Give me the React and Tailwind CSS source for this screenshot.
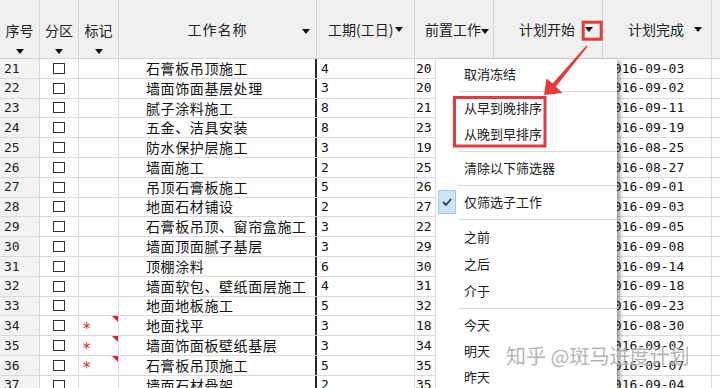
import React from "react";

const rows = [
  [21, "石膏板吊顶施工", 4, 20, "2016-09-03"],
  [22, "墙面饰面基层处理", 3, 20, "2016-09-02"],
  [23, "腻子涂料施工", 8, 21, "2016-09-11"],
  [24, "五金、洁具安装", 8, 23, "2016-09-19"],
  [25, "防水保护层施工", 3, 19, "2016-08-25"],
  [26, "墙面施工", 2, 25, "2016-08-27"],
  [27, "吊顶石膏板施工", 5, 26, "2016-09-01"],
  [28, "地面石材铺设", 2, 27, "2016-09-03"],
  [29, "石膏板吊顶、窗帘盒施工", 3, 22, "2016-09-05"],
  [30, "墙面顶面腻子基层", 3, 29, "2016-09-08"],
  [31, "顶棚涂料", 6, 30, "2016-09-14"],
  [32, "墙面软包、壁纸面层施工", 4, 31, "2016-09-18"],
  [33, "地面地板施工", 5, 32, "2016-09-23"],
  [34, "地面找平", 3, 18, "2016-08-30", true],
  [35, "墙面饰面板壁纸基层", 3, 34, "2016-09-02", true],
  [36, "石膏板吊顶施工", 5, 35, "2016-09-07", true],
  [37, "墙面石材骨架", 2, 35, "2016-09-04"],
];

const mono = "font-['DejaVu_Sans_Mono','Noto_Sans_CJK_SC',monospace] text-[13px]";

function Caret() {
  return <div className="w-0 h-0 border-x-[4px] border-x-transparent border-t-[5px] border-t-[#111]" />;
}

function StackHead({ w, label }) {
  return (
    <div className={`${w} shrink-0 flex flex-col items-center border-r border-[#d6d6d6] pt-[20px]`}>
      <div className="leading-[20px]">{label}</div>
      <div className="mt-[9px]">
        <Caret />
      </div>
    </div>
  );
}

function MenuItem({ children, h = "h-[26px]", checked }) {
  return (
    <div className={`flex items-center ${h}`}>
      <div className="w-[28px] h-full flex items-center pl-[2px]">
        {checked && (
          <div className="w-[18px] h-[24px] bg-[#cfe5f7] border border-[#9dcbee] flex items-center justify-center">
            <svg width="10" height="8" viewBox="0 0 10 8">
              <path d="M1 4 L4 7 L9 1" fill="none" stroke="#1c3c6b" strokeWidth="1.8" />
            </svg>
          </div>
        )}
      </div>
      <span>{children}</span>
    </div>
  );
}

function Sep() {
  return (
    <div className="h-[8px] flex items-center">
      <div className="ml-[22px] flex-1 h-px bg-[#d9d9d9]" />
    </div>
  );
}

export default function App() {
  return (
    <div className="relative w-[720px] h-[388px] overflow-hidden bg-white text-[#111] font-['Noto_Sans_CJK_SC',sans-serif]">
      {/* header */}
      <div className="flex h-[59px] bg-[#f0f0f0] border-b border-[#d3d3d3] text-[14px] text-[#222]">
        <StackHead w="w-[40px]" label="序号" />
        <StackHead w="w-[39px]" label="分区" />
        <StackHead w="w-[40px]" label="标记" />
        <div className="w-[198px] shrink-0 relative flex items-center justify-center border-r border-[#d6d6d6] pt-[1px]">
          <span className="tracking-[1px]">工作名称</span>
          <div className="absolute right-[6px] top-[29px]">
            <Caret />
          </div>
        </div>
        <div className="w-[98px] shrink-0 flex items-center pl-[11px] gap-[2px] border-r border-[#d6d6d6] pt-[1px]">
          <span>工期(工日)</span>
          <Caret />
        </div>
        <div className="w-[79px] shrink-0 relative flex items-center pl-[10px] overflow-hidden whitespace-nowrap border-r border-[#d6d6d6] pt-[1px]">
          <span>前置工作</span>
          <div className="absolute right-[4px] top-[29px]">
            <Caret />
          </div>
        </div>
        <div className="w-[109px] shrink-0 flex items-center pl-[25px] border-r border-[#d6d6d6] pt-[1px]">
          <span>计划开始</span>
          <div className="ml-[10px]">
            <Caret />
          </div>
        </div>
        <div className="w-[109px] shrink-0 flex items-center pl-[25px] border-r border-[#d6d6d6] pt-[1px]">
          <span>计划完成</span>
          <div className="ml-[10px]">
            <Caret />
          </div>
        </div>
        <div className="flex-1" />
      </div>

      {/* rows */}
      {rows.map(([no, name, days, pre, start, mark]) => (
        <div key={no} className="flex h-[19.8px] border-b border-[#dadada] items-stretch">
          <div className={`w-[40px] shrink-0 bg-[#f3f3f3] border-r border-[#d6d6d6] pl-[4px] flex items-center ${mono} text-[#222]`}>
            {no}
          </div>
          <div className="w-[39px] shrink-0 border-r border-[#dadada] flex items-center justify-center">
            <div className="w-[12px] h-[11px] border border-[#333] bg-white" />
          </div>
          <div className="w-[40px] shrink-0 relative border-r border-[#dadada] flex items-center pl-[4px]">
            {mark && (
              <>
                <span className="font-['DejaVu_Sans',sans-serif] text-[#e0262b] text-[15px] leading-none mt-[7px]">*</span>
                <div className="absolute right-0 top-0 w-0 h-0 border-t-[6px] border-t-[#d9222a] border-l-[6px] border-l-transparent" />
              </>
            )}
          </div>
          <div className="w-[198px] shrink-0 border-r-2 border-r-[#2a2a2a] flex items-center pl-[27px] text-[14px] tracking-[0.6px] whitespace-nowrap overflow-hidden">
            {name}
          </div>
          <div className={`w-[98px] shrink-0 border-r border-[#dadada] flex items-center pl-[4px] ${mono}`}>{days}</div>
          <div className={`w-[79px] shrink-0 border-r border-[#dadada] flex items-center pl-[1px] ${mono}`}>{pre}</div>
          <div className="w-[109px] shrink-0 border-r border-[#dadada]" />
          <div className={`w-[109px] shrink-0 border-r border-[#dadada] flex items-center pl-[3px] ${mono}`}>{start}</div>
          <div className="flex-1" />
        </div>
      ))}

      {/* filter dropdown */}
      <div className="absolute left-[435px] top-[59px] w-[182px] h-[340px] bg-white border-l border-[#dedede] shadow-[3px_2px_4px_rgba(0,0,0,0.4)] pt-[2px] text-[13px] text-[#1a1a1a]">
        <MenuItem>取消冻结</MenuItem>
        <Sep />
        <MenuItem>从早到晚排序</MenuItem>
        <MenuItem>从晚到早排序</MenuItem>
        <Sep />
        <MenuItem>清除以下筛选器</MenuItem>
        <Sep />
        <MenuItem checked>仅筛选子工作</MenuItem>
        <Sep />
        <MenuItem h="h-[27px]">之前</MenuItem>
        <MenuItem h="h-[27px]">之后</MenuItem>
        <MenuItem h="h-[27px]">介于</MenuItem>
        <Sep />
        <MenuItem>今天</MenuItem>
        <MenuItem>明天</MenuItem>
        <MenuItem>昨天</MenuItem>
      </div>

      {/* annotations */}
      <svg className="absolute left-0 top-0 pointer-events-none" width="720" height="388" viewBox="0 0 720 388">
        <rect x="583.2" y="22.2" width="18" height="17" fill="none" stroke="#e23a3d" strokeWidth="3" />
        <rect x="454.5" y="97.5" width="90.5" height="48.5" fill="none" stroke="#e23a3d" strokeWidth="3" />
        <polygon
          points="544,95 546.5,78.5 552.6,83.6 586.4,45.6 587.6,46.6 555.8,86.8 562.5,93"
          fill="#e8393b"
        />
      </svg>

      <div className="absolute left-[506px] top-[342px] text-[20px] leading-[28px] text-[#9a9a9a]/75 whitespace-nowrap [text-shadow:0_0_2px_rgba(255,255,255,0.9)]">
        知乎 @斑马进度计划
      </div>
    </div>
  );
}
